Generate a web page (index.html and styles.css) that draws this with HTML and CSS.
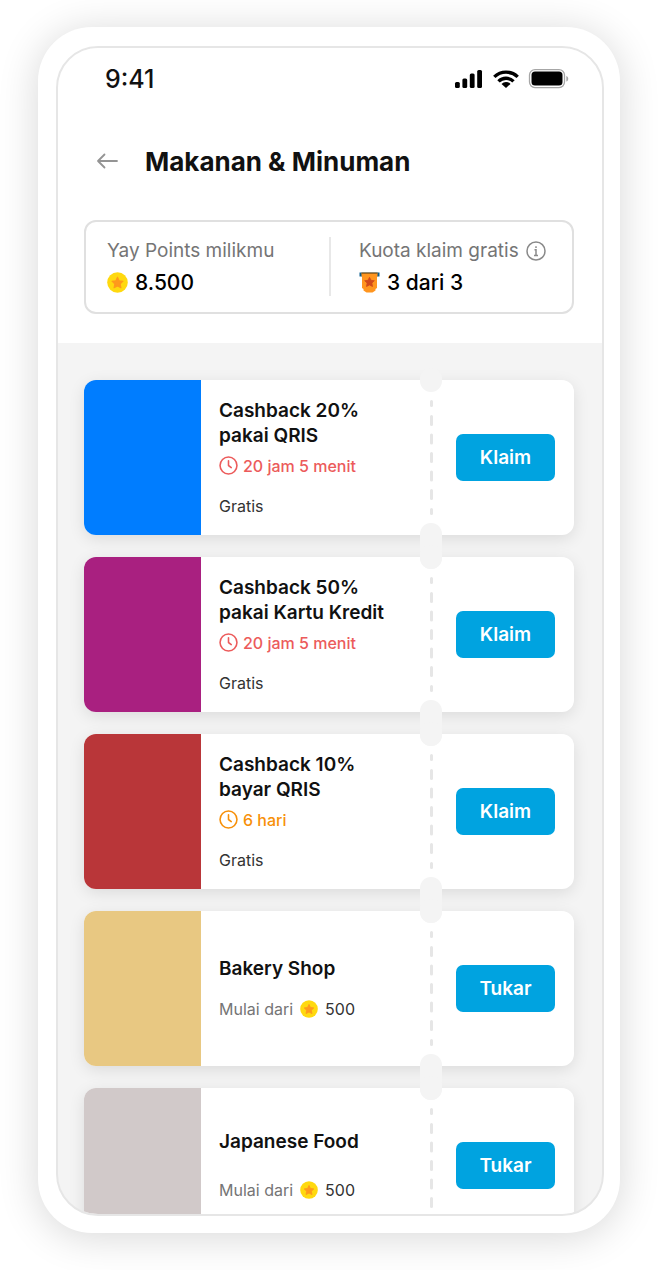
FILE: index.html
```html
<!DOCTYPE html>
<html lang="id">
<head>
  <meta charset="UTF-8">
  <meta name="viewport" content="width=device-width, initial-scale=1">
  <title>Makanan &amp; Minuman</title>
  <link rel="stylesheet" href="styles.css">
</head>
<body>

<svg class="sprite" aria-hidden="true">
  <symbol id="coin" viewBox="0 0 20 20">
    <circle cx="10" cy="10" r="9.8" fill="#ffd90f"/>
    <path d="M10 4.9l1.6 3.4 3.7.5-2.7 2.6.7 3.7-3.3-1.8-3.3 1.8.7-3.7-2.7-2.6 3.7-.5z" fill="#ff9a1c" stroke="#ff9a1c" stroke-linejoin="round"/>
  </symbol>
  <symbol id="clock" viewBox="0 0 18 18">
    <g fill="none" stroke="currentColor" stroke-width="1.5" stroke-linecap="round" stroke-linejoin="round">
      <circle cx="9" cy="9" r="8"/>
      <path d="M9 4.5V9l2.6 2"/>
    </g>
  </symbol>
  <symbol id="dashes" viewBox="0 0 3 115">
    <path d="M1.5 1.5v4M1.5 16.5v8M1.5 35v8M1.5 53.5v8M1.5 72v8M1.5 90.5v8M1.5 109.5v4" stroke="#e6e6e6" stroke-width="3" stroke-linecap="round"/>
  </symbol>
</svg>

<div class="phone">
  <div class="screen">

    <header class="header">
      <div class="status-bar">
        <span>9:41</span>
        <svg class="status-icons" width="114" height="20" viewBox="0 0 114 20">
          <rect x="0" y="13" width="4.8" height="6" rx="1.5"/>
          <rect x="7.4" y="9.5" width="4.800" height="9.500" rx="1.500"/>
          <rect x="14.800" y="4.500" width="4.800" height="14.500" rx="1.500"/>
          <rect x="22.200" y="1" width="4.800" height="18" rx="1.500"/>
          <g fill="none" stroke="#000" stroke-width="3.400">
            <path d="M39.300 7.900a16.800 16.800 0 0 1 23.400 0"/>
            <path d="M43.500 12.400a10.600 10.600 0 0 1 15 0"/>
          </g>
          <path d="M51 19l-4.500-4.100a6.400 6.400 0 0 1 9 0z"/>
          <rect x="74.500" y=".6" width="35" height="18" rx="5.500" fill="none" stroke="#a6a6a6" stroke-width="1.300"/>
          <rect x="76.500" y="2.600" width="31" height="14" rx="3.500"/>
          <path d="M111.300 7c2.600.8 2.600 4.800 0 5.600z" fill="#a6a6a6"/>
        </svg>
      </div>

      <div class="title-bar">
        <a class="back" href="#" aria-label="Kembali">
          <svg width="22" height="16" viewBox="0 0 22 16" fill="none" stroke="#949494" stroke-width="1.8" stroke-linecap="round" stroke-linejoin="round">
            <path d="M21 8H2M8.500 1.500L2 8l6.500 6.500"/>
          </svg>
        </a>
        <h1>Makanan &amp; Minuman</h1>
      </div>

      <div class="summary">
        <div class="summary-item">
          <div class="summary-label">Yay Points milikmu</div>
          <div class="summary-value">
            <svg width="21" height="21"><use href="#coin"/></svg>
            8.500
          </div>
        </div>
        <div class="summary-item">
          <div class="summary-label">
            Kuota klaim gratis
            <svg width="20" height="20" viewBox="0 0 20 20" fill="none" stroke="#8a8a8a" stroke-width="1.5">
              <circle cx="10" cy="10" r="9"/>
              <path d="M8.500 8.800H10v5.400M8 14.400h4M10 5.200v1.800"/>
            </svg>
          </div>
          <div class="summary-value">
            <svg width="21" height="21" viewBox="0 0 21 21">
              <path d="M.5.5h20V4.500H.5z" fill="#0b5c8e"/>
              <path d="M2.500 1h16v3.500h-.5v11.500l-1.500 1v1.500l-3 2h-6l-3-2V17L3 16V4.500h-.5z" fill="#ff951f"/>
              <path d="M2.500.5h16V2h-16z" fill="#a0641a"/>
              <path d="M10.500 5.300l1.500 3 3.300.4-2.400 2.400.6 3.400-3-1.600-3 1.600.6-3.400-2.400-2.400 3.300-.4z" fill="#d1491b" stroke="#d1491b" stroke-width=".8"/>
            </svg>
            3 dari 3
          </div>
        </div>
      </div>
    </header>

    <main class="offers">
      <article class="ticket">
        <div class="thumb blue"></div>
        <div class="info">
          <h2>Cashback 20%<br>pakai QRIS</h2>
          <p class="time urgent"><svg width="19" height="19"><use href="#clock"/></svg>20 jam 5 menit</p>
          <p class="price">Gratis</p>
        </div>
        <div class="divider"><svg width="3" height="115"><use href="#dashes"/></svg></div>
        <div class="action"><button type="button">Klaim</button></div>
      </article>

      <article class="ticket">
        <div class="thumb purple"></div>
        <div class="info">
          <h2>Cashback 50%<br>pakai Kartu Kredit</h2>
          <p class="time urgent"><svg width="19" height="19"><use href="#clock"/></svg>20 jam 5 menit</p>
          <p class="price">Gratis</p>
        </div>
        <div class="divider"><svg width="3" height="115"><use href="#dashes"/></svg></div>
        <div class="action"><button type="button">Klaim</button></div>
      </article>

      <article class="ticket">
        <div class="thumb red"></div>
        <div class="info">
          <h2>Cashback 10%<br>bayar QRIS</h2>
          <p class="time"><svg width="19" height="19"><use href="#clock"/></svg>6 hari</p>
          <p class="price">Gratis</p>
        </div>
        <div class="divider"><svg width="3" height="115"><use href="#dashes"/></svg></div>
        <div class="action"><button type="button">Klaim</button></div>
      </article>

      <article class="ticket">
        <div class="thumb sand"></div>
        <div class="info shop">
          <h2>Bakery Shop</h2>
          <p class="price"><span>Mulai dari</span><svg width="18" height="18"><use href="#coin"/></svg>500</p>
        </div>
        <div class="divider"><svg width="3" height="115"><use href="#dashes"/></svg></div>
        <div class="action"><button type="button">Tukar</button></div>
      </article>

      <article class="ticket">
        <div class="thumb grey"></div>
        <div class="info shop loose">
          <h2>Japanese Food</h2>
          <p class="price"><span>Mulai dari</span><svg width="18" height="18"><use href="#coin"/></svg>500</p>
        </div>
        <div class="divider"><svg width="3" height="115"><use href="#dashes"/></svg></div>
        <div class="action"><button type="button">Tukar</button></div>
      </article>
    </main>

  </div>
</div>

</body>
</html>
```

FILE: styles.css
```css
* {
  box-sizing: border-box;
}
body {
  margin: 0;
  height: 100vh;
  padding: 27px 47px 37px 38px;
  font-family: Inter, "Liberation Sans", sans-serif;
  color: #111;
  background: #fff;
}
h1, h2, p {
  margin: 0;
}
svg {
  flex: none;
}
.sprite {
  position: absolute;
  width: 0;
  height: 0;
}

/* phone */
.phone {
  height: 100%;
  padding: 19px 16px 17px 18px;
  border-radius: 54px;
  background: #fff;
  box-shadow: 0 4px 40px rgba(0, 0, 0, 0.16);
}
.screen {
  height: 100%;
  overflow: hidden;
  border: 2px solid #e6e6e6;
  border-radius: 42px;
  background: #f4f4f4;
}

/* header */
.header {
  padding: 15px 28px 29px 26px;
  background: #fff;
}
.status-bar {
  display: flex;
  align-items: center;
  justify-content: space-between;
  height: 32px;
  padding: 0 5px 0 21px;
  font-size: 25px;
  font-weight: 500;
}
.status-icons {
  overflow: visible;
}
.title-bar {
  display: flex;
  align-items: center;
  gap: 27px;
  height: 36px;
  margin: 48px 0 41px;
  padding-left: 12px;
}
.back {
  display: flex;
}
h1 {
  font-size: 26px;
  font-weight: 700;
}
.summary {
  display: grid;
  grid-template-columns: 1fr 1fr;
  padding: 15px 0 16px;
  border: 2px solid #e0e0e0;
  border-radius: 12px;
}
.summary-item {
  padding-left: 21px;
}
.summary-item + .summary-item {
  padding-left: 28px;
  border-left: 2px solid #e8e8e8;
}
.summary-label,
.summary-value {
  display: flex;
  align-items: center;
  gap: 7px;
}
.summary-label {
  height: 27px;
  font-size: 19px;
  color: #757575;
}
.summary-value {
  height: 36px;
  margin-bottom: -4px;
  font-size: 21px;
  font-weight: 500;
  color: #000;
}

/* tickets */
.offers {
  display: flex;
  flex-direction: column;
  gap: 22px;
  padding: 37px 28px 37px 26px;
}
.ticket {
  display: grid;
  grid-template-columns: 117px 1fr 22px 132px;
  height: 155px;
  border-radius: 12px;
  background: #fff;
  box-shadow: 0 4px 16px rgba(0, 0, 0, 0.1);
}
.thumb {
  border-radius: 12px 0 0 12px;
}
.blue { background: #007dff; }
.purple { background: #a92080; }
.red { background: #b93639; }
.sand { background: #e8c882; }
.grey { background: #d1c9c9; }
.info {
  display: flex;
  flex-direction: column;
  justify-content: center;
  padding: 0 0 2px 18px;
}
h2 {
  font-size: 19px;
  font-weight: 600;
  line-height: 25px;
}
.time,
.price {
  display: flex;
  align-items: center;
  font-size: 16px;
  line-height: 20px;
}
.time {
  gap: 5px;
  margin: 8px 0 20px;
  font-weight: 500;
  color: #f79009;
}
.urgent {
  color: #ec5b5b;
}
.price {
  gap: 7px;
  color: #333;
}
.price span {
  color: #757575;
}
.shop {
  gap: 18px;
}
.loose {
  gap: 26px;
}
.divider {
  display: flex;
  align-items: center;
  justify-content: center;
  position: relative;
}
/* notches, the lower one runs on through the gap to the next ticket */
.divider::before,
.divider::after {
  content: "";
  position: absolute;
  left: 0;
  width: 22px;
  border-radius: 11px;
  background: #f4f4f4;
}
.divider::before {
  top: -12px;
  height: 24px;
}
.divider::after {
  bottom: -34px;
  height: 46px;
}
.action {
  display: flex;
  align-items: center;
  padding: 0 19px 0 14px;
}
button {
  width: 100%;
  height: 47px;
  padding: 0;
  border: none;
  border-radius: 7px;
  background: #00a3e0;
  color: #fff;
  font-family: inherit;
  font-size: 19px;
  font-weight: 600;
  cursor: pointer;
}
```
